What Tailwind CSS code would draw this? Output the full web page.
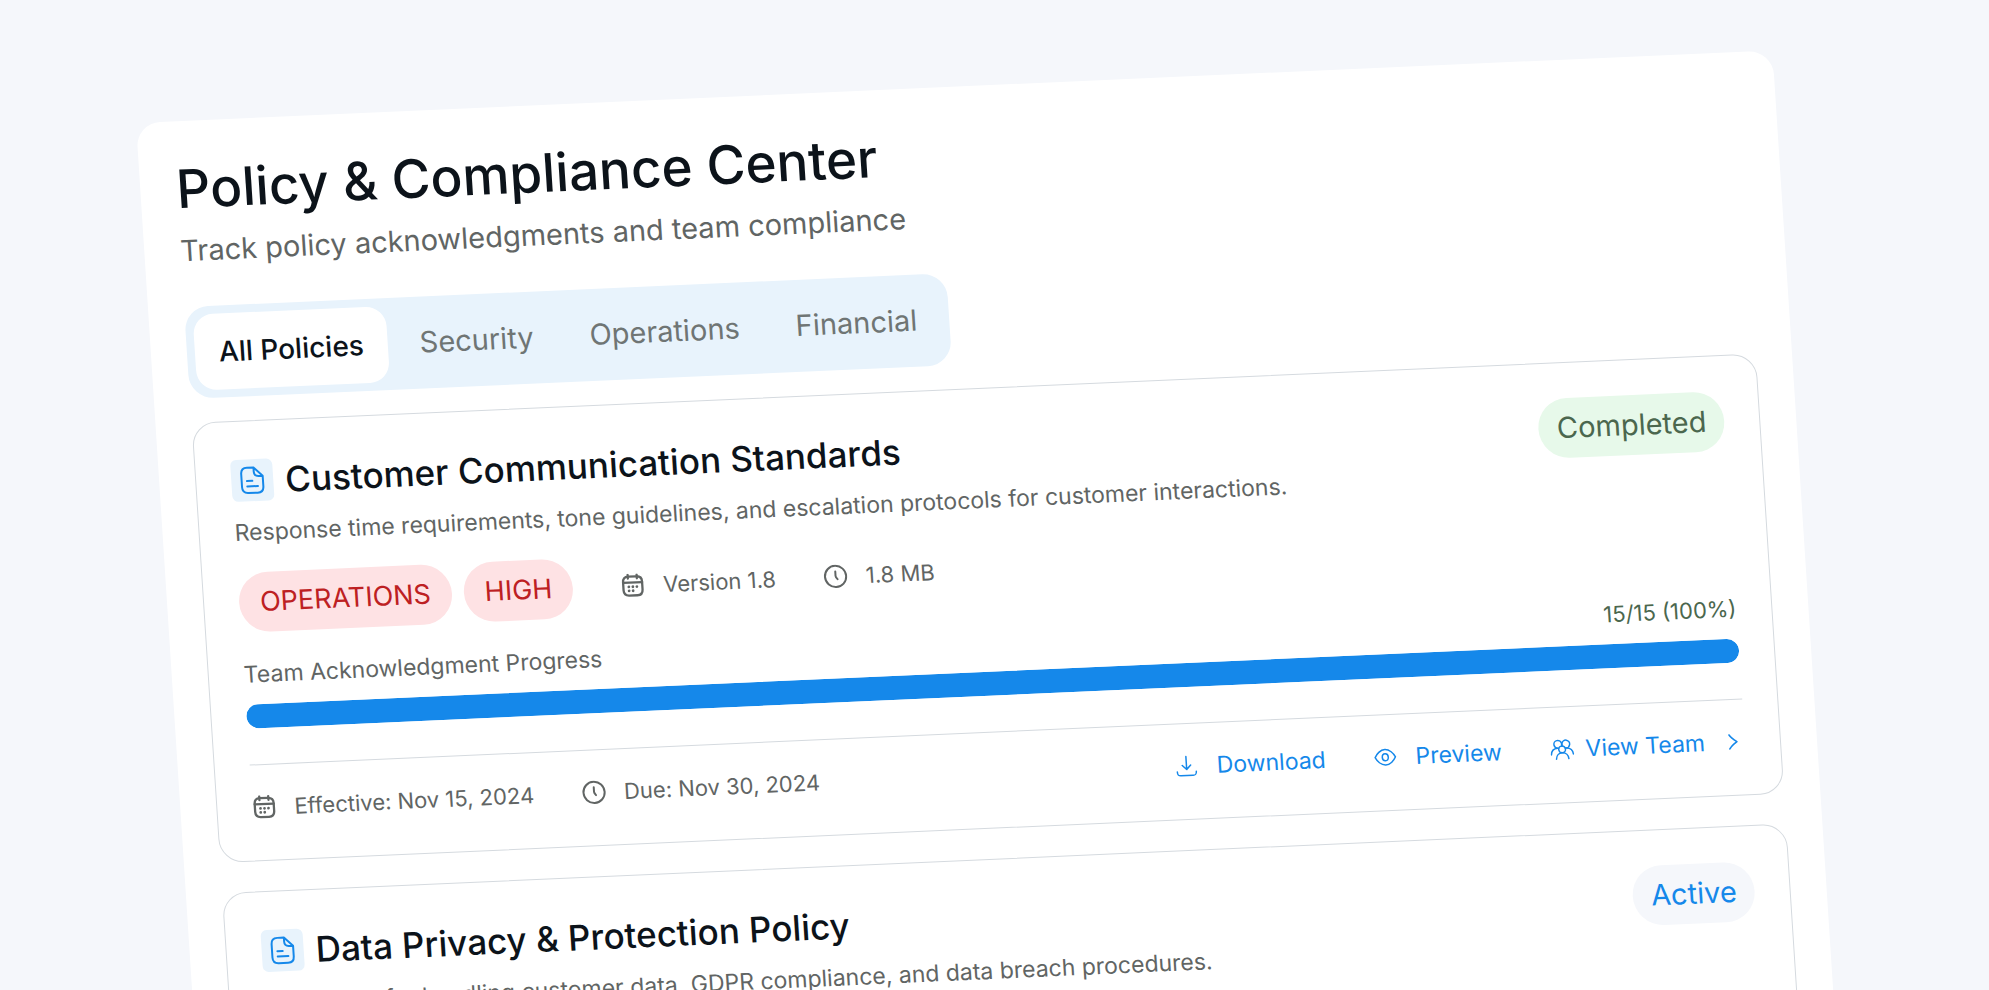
<!DOCTYPE html>
<html lang="en">
<head>
<meta charset="utf-8">
<meta name="viewport" content="width=device-width, initial-scale=1">
<title>Policy &amp; Compliance Center</title>
<script src="https://cdn.jsdelivr.net/npm/@tailwindcss/browser@4"></script>
</head>
<body class="h-screen overflow-hidden bg-[#f5f7fb] font-['Inter',sans-serif] text-[#616564]">
<svg class="hidden" aria-hidden="true">
  <symbol id="file" viewBox="0 0 24 24" fill="none" stroke="currentColor" stroke-width="1.5" stroke-linecap="round" stroke-linejoin="round">
    <path d="M13.500 2.500H8.500C5.200 2.500 4 4 4 7V17C4 20 5.200 21.500 8.500 21.500H15.500C18.800 21.500 20 20 20 17V9L13.500 2.500V5.500C13.500 8 14.500 9 17 9H20"/>
    <path d="M8 12.500H12M8 16.500H16"/>
  </symbol>
  <symbol id="calendar" viewBox="0 0 24 24" fill="none" stroke="currentColor" stroke-width="2.300" stroke-linecap="round" stroke-linejoin="round">
    <path d="M7.500 1.300V5M16.500 1.300V5M2.500 9H21.500"/>
    <path d="M8 3H16C19.800 3 21.500 4.800 21.500 8.500V16.500C21.500 20.200 19.800 22 16 22H8C4.200 22 2.500 20.200 2.500 16.500V8.500C2.500 4.800 4.200 3 8 3Z"/>
    <path stroke-width="2.800" d="M8 13.300H8.010M12 13.300H12.010M16 13.300H16.010M8 17.300H8.010M12 17.300H12.010"/>
  </symbol>
  <symbol id="clock" viewBox="0 0 24 24" fill="none" stroke="currentColor" stroke-width="2" stroke-linecap="round" stroke-linejoin="round">
    <circle cx="12" cy="12" r="10.600"/>
    <path d="M12 7V11.500C12 12.500 12.500 13.300 13.800 14.800"/>
  </symbol>
  <symbol id="download" viewBox="0 0 24 24" fill="none" stroke="currentColor" stroke-width="1.500" stroke-linecap="round" stroke-linejoin="round">
    <path d="M12 2.500V15.500M7.800 11.200L12 15.500L16.200 11.200"/>
    <path d="M2.500 17.500C2.500 20.800 3.500 21.500 6 21.500H18C20.500 21.500 21.500 20.800 21.500 17.500"/>
  </symbol>
  <symbol id="eye" viewBox="0 0 24 24" fill="none" stroke="currentColor" stroke-width="1.500" stroke-linecap="round" stroke-linejoin="round">
    <path d="M1.800 12C3.500 8.500 7.500 4.200 12 4.200S20.500 8.500 22.200 12C20.500 15.500 16.500 19.800 12 19.800S3.500 15.500 1.800 12Z"/>
    <ellipse cx="12" cy="12" rx="3" ry="3.500"/>
  </symbol>
  <symbol id="team" viewBox="0 0 24 24" fill="none" stroke="currentColor" stroke-width="1.500" stroke-linecap="round" stroke-linejoin="round">
    <circle cx="12" cy="12" r="3.400"/>
    <path d="M5.800 21.500C6 18 8.500 15.400 12 15.400S18 18 18.200 21.500"/>
    <path d="M8.700 10.600A3.900 3.900 0 1 1 11.800 5.800V8.600"/>
    <path d="M15.300 10.600A3.900 3.900 0 1 0 12.200 5.800V8.600"/>
    <path d="M1 17C1.300 13.300 3.800 10.800 7.500 10.700M23 17C22.700 13.300 20.200 10.800 16.500 10.700"/>
  </symbol>
  <symbol id="chevron" viewBox="0 0 24 24" fill="none" stroke="currentColor" stroke-width="1.600" stroke-linecap="round" stroke-linejoin="round">
    <path d="M8.500 5C9.500 6.800 12 9.300 16 12C12 14.700 9.500 17.200 8.500 19"/>
  </symbol>
</svg>

<main class="mt-[123px] mr-[215px] ml-[136px] min-h-[1200px] origin-top-left -rotate-[2.54deg] skew-x-[1.16deg] rounded-3xl bg-white p-9">
  <header>
    <h1 class="text-[53px] leading-[64px] font-medium text-[#0c131a]">Policy &amp; Compliance Center</h1>
    <p class="mt-2.5 text-[29px] leading-10">Track policy acknowledgments and team compliance</p>
  </header>

  <nav class="mt-9 flex w-fit gap-2 rounded-3xl bg-[#e8f3fc] p-2 text-[29px] leading-9 text-[#6f7574]" aria-label="Policy categories">
    <button type="button" class="rounded-[20px] bg-white px-6 py-5 text-[28px] font-medium text-[#0c131a]" aria-pressed="true">All Policies</button>
    <button type="button" class="rounded-[20px] px-6 py-5">Security</button>
    <button type="button" class="rounded-[20px] px-6 py-5">Operations</button>
    <button type="button" class="rounded-[20px] px-6 py-5">Financial</button>
  </nav>

  <section class="mt-6 flex flex-col gap-[30px]">
    <article class="rounded-3xl border border-[#d5dadf] p-[35px] text-[23px] leading-9">
      <div class="flex items-start justify-between gap-6">
        <div>
          <div class="flex h-12 items-center gap-3">
            <span class="flex size-[42px] items-center justify-center rounded-md bg-[#e8f3fc] text-[#1588ea]"><svg class="size-8"><use href="#file"/></svg></span>
            <h2 class="text-[35px] leading-[48px] font-medium text-[#0c131a]">Customer Communication Standards</h2>
          </div>
          <p class="mt-2.5">Response time requirements, tone guidelines, and escalation protocols for customer interactions.</p>
        </div>
        <span class="rounded-full bg-[#e7f9ea] px-[18px] py-3 text-[29px] text-[#4b674e]">Completed</span>
      </div>
      <div class="mt-[22px] flex items-center gap-12 text-[22px]">
        <div class="flex gap-3 text-[27px] text-[#bd2022]">
          <span class="rounded-full bg-[#fee2e4] px-[21px] py-3">OPERATIONS</span>
          <span class="rounded-full bg-[#fee2e4] px-[21px] py-3">HIGH</span>
        </div>
        <span class="flex items-center gap-[18px]"><svg class="size-6"><use href="#calendar"/></svg>Version 1.8</span>
        <span class="flex items-center gap-[18px]"><svg class="size-6"><use href="#clock"/></svg>1.8 MB</span>
      </div>
      <div class="mt-6 flex justify-between">
        <span id="ack">Team Acknowledgment Progress</span>
        <span class="text-[22px] text-[#4b674e]">15/15 (100%)</span>
      </div>
      <div class="mt-3 h-6 overflow-hidden rounded-full bg-[#e8f3fc]" role="progressbar" aria-labelledby="ack" aria-valuenow="100" aria-valuemin="0" aria-valuemax="100">
        <div class="h-full rounded-full bg-[#1588ea]" style="width:100%"></div>
      </div>
      <div class="mt-9 flex items-center justify-between border-t border-[#d5dadf] pt-6">
        <div class="flex gap-12 text-[22px]">
          <span class="flex items-center gap-[18px]"><svg class="size-6"><use href="#calendar"/></svg>Effective: Nov 15, 2024</span>
          <span class="flex items-center gap-[18px]"><svg class="size-6"><use href="#clock"/></svg>Due: Nov 30, 2024</span>
        </div>
        <div class="flex gap-12 text-[#1588ea]">
          <button type="button" class="flex items-center gap-[18px]"><svg class="size-6"><use href="#download"/></svg>Download</button>
          <button type="button" class="flex items-center gap-[18px]"><svg class="size-6"><use href="#eye"/></svg>Preview</button>
          <button type="button" class="flex items-center gap-3"><svg class="size-6"><use href="#team"/></svg>View Team<svg class="ml-1 size-6"><use href="#chevron"/></svg></button>
        </div>
      </div>
    </article>

    <article class="min-h-[440px] rounded-3xl border border-[#d5dadf] p-[35px] text-[23px] leading-9">
      <div class="flex items-start justify-between gap-6">
        <div>
          <div class="flex h-12 items-center gap-3">
            <span class="flex size-[42px] items-center justify-center rounded-md bg-[#e8f3fc] text-[#1588ea]"><svg class="size-8"><use href="#file"/></svg></span>
            <h2 class="text-[35px] leading-[48px] font-medium text-[#0c131a]">Data Privacy &amp; Protection Policy</h2>
          </div>
          <p class="mt-2.5">Guidelines for handling customer data, GDPR compliance, and data breach procedures.</p>
        </div>
        <span class="rounded-full bg-[#f5f7fb] px-[18px] py-3 text-[29px] text-[#1588ea]">Active</span>
      </div>
    </article>
  </section>
</main>
</body>
</html>
